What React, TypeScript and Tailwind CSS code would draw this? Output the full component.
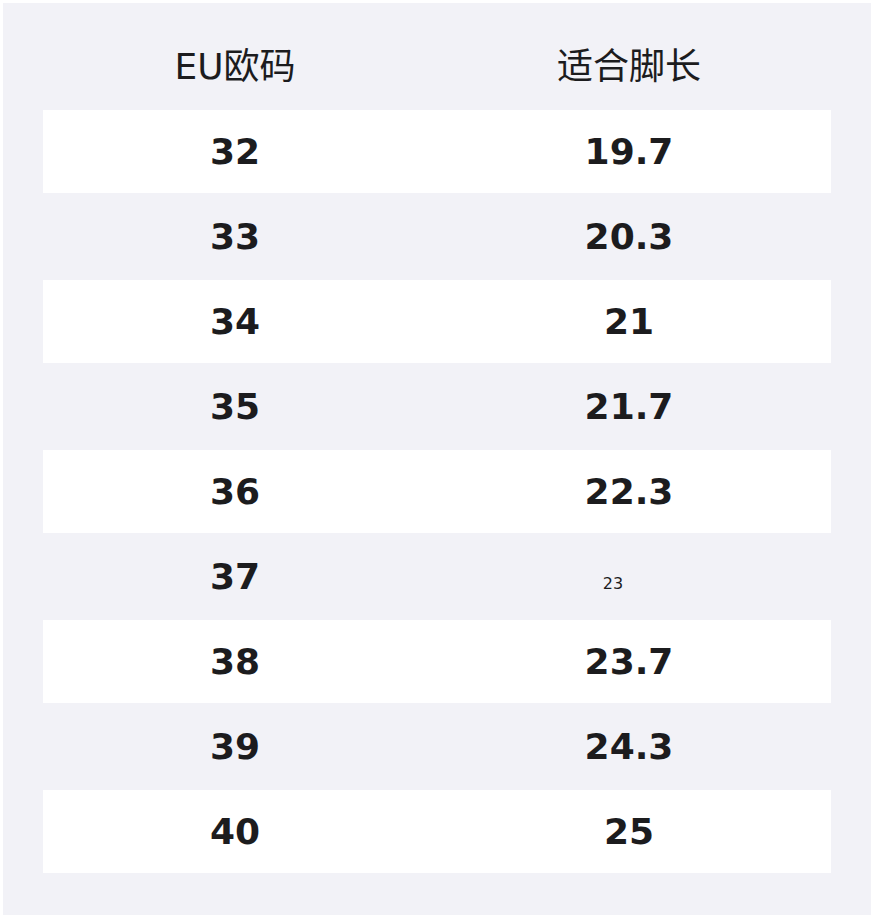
import React from 'react';

const rows: [string, string][] = [
  ['32', '19.7'],
  ['33', '20.3'],
  ['34', '21'],
  ['35', '21.7'],
  ['36', '22.3'],
  ['37', '23'],
  ['38', '23.7'],
  ['39', '24.3'],
  ['40', '25'],
];

export default function App() {
  return (
    <div className="m-[3px] bg-[#f2f2f7] p-10 text-[#1c1c1e] font-['DejaVu_Sans','Noto_Sans_CJK_SC',sans-serif]">
      <div className="flex flex-col gap-[2px] py-[2px]">
        <div className="grid h-[63px] grid-cols-[384px_404px] items-start pt-[1px] text-center text-[36px] leading-[42px]">
          <div>EU欧码</div>
          <div>适合脚长</div>
        </div>
        {rows.map(([eu, len], i) => (
          <div
            key={eu}
            className={`grid h-[83px] grid-cols-[384px_404px] items-center text-center text-[36px] font-bold ${
              i % 2 === 0 ? 'bg-white' : ''
            }`}
          >
            <div>{eu}</div>
            {/* 37 row: the length shows small, as in the source */}
            {eu === '37' ? (
              <div className="pr-[32px]">
                <span className="text-[16px] font-normal">{len}</span>
              </div>
            ) : (
              <div>{len}</div>
            )}
          </div>
        ))}
      </div>
    </div>
  );
}
